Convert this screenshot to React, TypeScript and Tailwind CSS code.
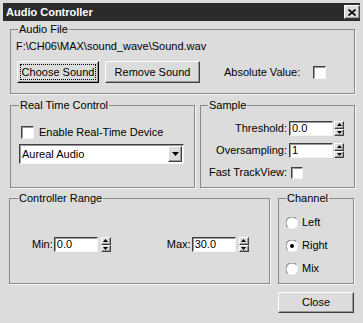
import React from 'react'

const sunken = 'bg-white border border-t-[#404040] border-l-[#404040] border-r-[#f4f4f4] border-b-[#f4f4f4] shadow-[inset_1px_1px_0_#9a9a9a]'
const raised = 'bg-[#dcdcdc] border border-t-white border-l-white border-r-[#404040] border-b-[#404040] shadow-[inset_-1px_-1px_0_#9a9a9a]'

function Group({ title, className, legendClass, children }: { title: string; className: string; legendClass?: string; children?: React.ReactNode }) {
  return (
    <fieldset className={`border border-[#8a8a8a] shadow-[1px_1px_0_#f4f4f4] ${className}`}>
      <legend className={`px-[1px] leading-[13px] ${legendClass ?? ''}`}>{title}</legend>
      {children}
    </fieldset>
  )
}

function Checkbox({ size = 13 }: { size?: number }) {
  return <span className={`block shrink-0 ${sunken} ${size === 13 ? 'w-[13px] h-[13px]' : 'w-[12px] h-[12px]'}`} />
}

function Spinner() {
  return (
    <div className="flex flex-col w-[10px] h-[15px] shrink-0">
      <div className={`flex-1 flex items-center justify-center ${raised}`}>
        <svg width="5" height="3" viewBox="0 0 5 3"><path d="M2.5 0 L5 3 L0 3 Z" fill="#000" /></svg>
      </div>
      <div className={`flex-1 flex items-center justify-center ${raised}`}>
        <svg width="5" height="3" viewBox="0 0 5 3"><path d="M0 0 L5 0 L2.5 3 Z" fill="#000" /></svg>
      </div>
    </div>
  )
}

function NumField({ value, w = 'w-[44px]' }: { value: string; w?: string }) {
  return (
    <div className={`${w} h-[15px] ${sunken} pl-[2px] leading-[13px] shrink-0`}>{value}</div>
  )
}

function Radio({ checked, label }: { checked?: boolean; label: string }) {
  return (
    <div className="flex items-center h-[13px] gap-[4px]">
      <svg width="12" height="12" viewBox="0 0 12 12">
        <circle cx="6" cy="6" r="5.5" fill="#fff" />
        <path d="M1.6 10.4 A5.5 5.5 0 0 1 10.4 1.6" fill="none" stroke="#6a6a6a" strokeWidth="1" />
        <path d="M10.4 1.6 A5.5 5.5 0 0 1 1.6 10.4" fill="none" stroke="#f4f4f4" strokeWidth="1" />
        {checked && <circle cx="6" cy="6" r="2" fill="#000" />}
      </svg>
      <span className="leading-[13px]">{label}</span>
    </div>
  )
}

export default function App() {
  return (
    <div className="w-[363px] h-[323px] bg-[#dcdcdc] pt-[3px] px-[3px] flex flex-col text-[11px] text-black font-['Liberation_Sans',Arial,sans-serif] overflow-hidden">
      {/* Title bar */}
      <div className="h-[18px] bg-[#2b2b2b] flex items-center justify-between pl-[3px] pr-0">
        <span className="text-white font-bold text-[11px] leading-[13px]">Audio Controller</span>
        <button className={`w-[16px] h-[14px] flex items-center justify-center ${raised}`}>
          <svg width="8" height="7" viewBox="0 0 8 7">
            <path d="M0.5 0.5 L7.5 6.5 M7.5 0.5 L0.5 6.5" stroke="#000" strokeWidth="1.6" />
          </svg>
        </button>
      </div>

      {/* Audio File */}
      <Group title="Audio File" className="ml-[7px] mt-[2px] w-[345px] h-[71px] pl-[5px]" legendClass="ml-[2px]">
        <div className="mt-[4px] leading-[13px]">F:\CH06\MAX\sound_wave\Sound.wav</div>
        <div className="flex items-center mt-[8px] ml-[1px]">
          <button className={`w-[82px] h-[22px] p-[2px] ${raised} border-r-black border-b-black`}>
            <span className="flex items-center justify-center h-full border border-dotted border-black leading-[13px] whitespace-nowrap">Choose Sound</span>
          </button>
          <button className={`w-[95px] h-[22px] ml-[6px] leading-[13px] whitespace-nowrap ${raised}`}>Remove Sound</button>
          <span className="ml-[24px] w-[89px] leading-[13px] whitespace-nowrap">Absolute Value:</span>
          <Checkbox />
        </div>
      </Group>

      {/* Real Time Control / Sample */}
      <div className="flex gap-[5px] ml-[7px] mt-[5px]">
        <Group title="Real Time Control" className="w-[185px] h-[89px] pl-[8px]">
          <div className="flex items-center mt-[14px] ml-[2px] gap-[5px]">
            <Checkbox />
            <span className="leading-[13px]">Enable Real-Time Device</span>
          </div>
          <div className={`mt-[5px] w-[165px] h-[20px] ${sunken} flex items-center justify-between pl-[2px] pr-[1px]`}>
            <span className="leading-[13px]">Aureal Audio</span>
            <span className={`w-[14px] h-[16px] flex items-center justify-center ${raised}`}>
              <svg width="7" height="4" viewBox="0 0 7 4"><path d="M0 0 L7 0 L3.5 4 Z" fill="#000" /></svg>
            </span>
          </div>
        </Group>
        <Group title="Sample" className="w-[155px] h-[89px] pl-[7px]">
          <div className="mt-[9px] flex flex-col gap-[7px]">
            <div className="flex items-center">
              <span className="w-[79px] text-right whitespace-nowrap leading-[13px]">Threshold:</span>
              <span className="ml-[2px]"><NumField value="0.0" /></span>
              <span className="ml-[1px]"><Spinner /></span>
            </div>
            <div className="flex items-center">
              <span className="w-[79px] text-right whitespace-nowrap leading-[13px]">Oversampling:</span>
              <span className="ml-[2px]"><NumField value="1" /></span>
              <span className="ml-[1px]"><Spinner /></span>
            </div>
            <div className="flex items-center mt-[1px]">
              <span className="w-[79px] flex justify-end whitespace-nowrap leading-[13px]">Fast TrackView:</span>
              <span className="ml-[4px]"><Checkbox size={12} /></span>
            </div>
          </div>
        </Group>
      </div>

      {/* Controller Range / Channel */}
      <div className="flex ml-[6px] mt-[4px]">
        <Group title="Controller Range" className="w-[261px] h-[92px] pl-[8px]">
          <div className="flex items-center mt-[32px] ml-[14px]">
            <span className="leading-[13px] mr-[1px]">Min:</span>
            <NumField value="0.0" />
            <span className="ml-[3px]"><Spinner /></span>
            <span className="ml-[56px] leading-[13px] mr-[1px]">Max:</span>
            <NumField value="30.0" />
            <span className="ml-[3px]"><Spinner /></span>
          </div>
        </Group>
        <Group title="Channel" className="ml-[8px] w-[76px] h-[92px] pl-[7px]">
          <div className="mt-[11px] flex flex-col gap-[10px]">
            <Radio label="Left" />
            <Radio label="Right" checked />
            <Radio label="Mix" />
          </div>
        </Group>
      </div>

      {/* Close */}
      <div className="flex justify-end pr-[6px] mt-[8px]">
        <button className={`w-[76px] h-[21px] leading-[13px] ${raised}`}>Close</button>
      </div>
    </div>
  )
}
